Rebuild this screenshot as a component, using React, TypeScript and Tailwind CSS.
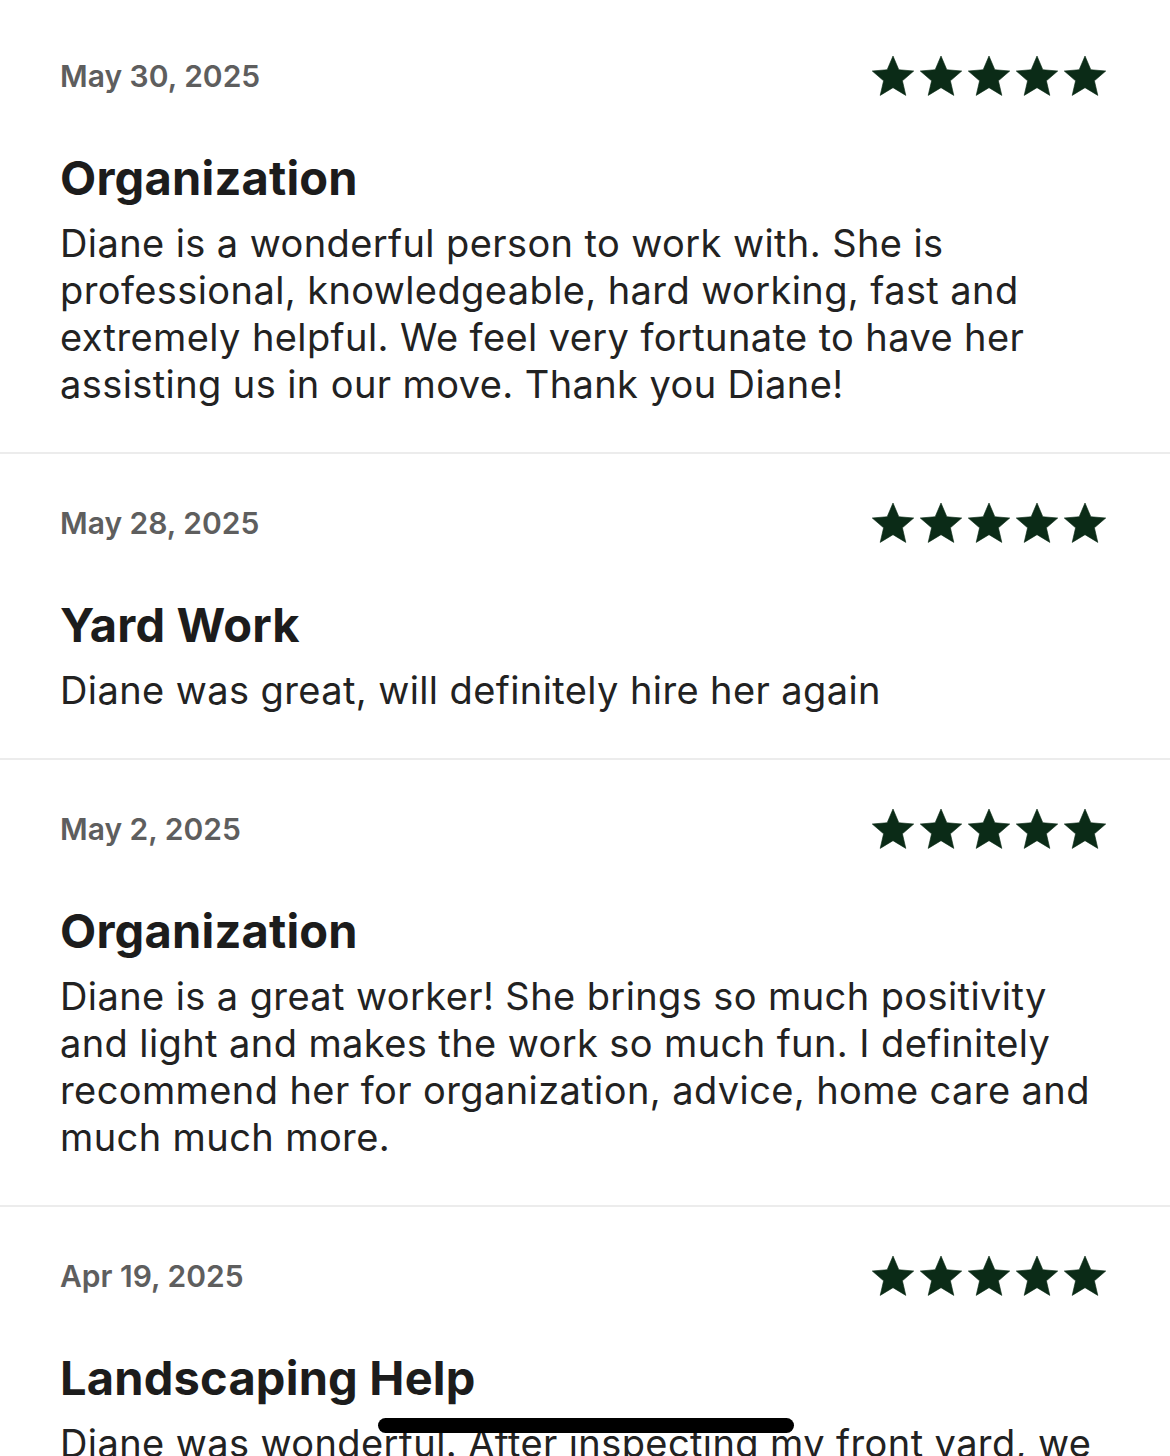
import React from "react";

interface Review {
  date: string;
  title: string;
  body: string;
}

const reviews: Review[] = [
  {
    date: "May 30, 2025",
    title: "Organization",
    body: "Diane is a wonderful person to work with. She is professional, knowledgeable, hard working, fast and extremely helpful. We feel very fortunate to have her assisting us in our move. Thank you Diane!",
  },
  {
    date: "May 28, 2025",
    title: "Yard Work",
    body: "Diane was great, will definitely hire her again",
  },
  {
    date: "May 2, 2025",
    title: "Organization",
    body: "Diane is a great worker! She brings so much positivity and light and makes the work so much fun. I definitely recommend her for organization, advice, home care and much much more.",
  },
  {
    date: "Apr 19, 2025",
    title: "Landscaping Help",
    body: "Diane was wonderful. After inspecting my front yard, we agreed on a plan and she got right to work. She was careful, thorough and left everything looking great.",
  },
];

const Star = () => (
  <svg width={42} height={40} viewBox="2 2 20 19.3" className="shrink-0">
    <path
      d="M12 17.27L18.18 21l-1.64-7.03L22 9.24l-7.19-.61L12 2 9.19 8.63 2 9.24l5.46 4.73L5.82 21z"
      fill="#0b2b17"
      stroke="#0b2b17"
      strokeWidth={0.3}
      strokeLinejoin="round"
    />
  </svg>
);

const ReviewItem = ({ review, first }: { review: Review; first: boolean }) => (
  <div
    className={`pl-[60px] pr-[64px] pb-[44px] border-b-2 border-[#ececec] ${
      first ? "pt-[56px]" : "pt-[49px]"
    }`}
  >
    <div className="flex items-center justify-between h-[40px]">
      <span className="text-[30px] leading-[40px] font-semibold text-[#5e5e5e]">
        {review.date}
      </span>
      <div className="flex gap-[6px]">
        {[0, 1, 2, 3, 4].map((i) => (
          <Star key={i} />
        ))}
      </div>
    </div>
    <h2 className="mt-[54px] text-[47px] leading-[56px] font-bold tracking-[0.2px] text-[#1c1c1c]">
      {review.title}
    </h2>
    <p className="mt-[14px] text-[38px] leading-[47px] tracking-[0.4px] text-[#222222]">
      {review.body}
    </p>
  </div>
);

export default function App() {
  return (
    <div
      className="relative w-[1170px] h-[1456px] overflow-hidden bg-white"
      style={{ fontFamily: "Inter, 'Noto Sans', sans-serif" }}
    >
      {reviews.map((r, i) => (
        <ReviewItem key={i} review={r} first={i === 0} />
      ))}
      {/* home indicator */}
      <div className="absolute left-[378px] top-[1418px] w-[416px] h-[15px] rounded-full bg-black" />
    </div>
  );
}
